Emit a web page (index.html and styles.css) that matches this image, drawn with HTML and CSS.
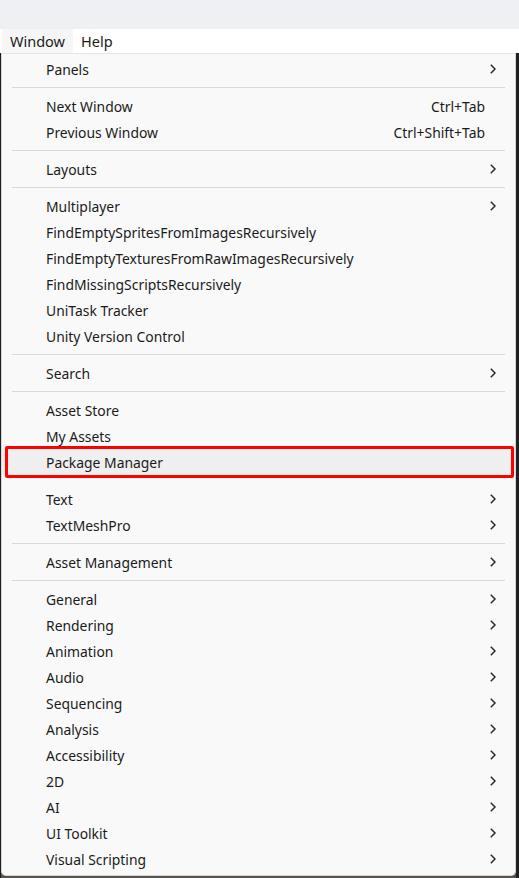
FILE: index.html
```html
<!DOCTYPE html>
<html>
<head>
<meta charset="utf-8">
<link rel="stylesheet" href="styles.css">
</head>
<body>
<div class="titlebar"></div>
<div class="menubar">
  <span class="mb-item active">Window</span>
  <span class="mb-item">Help</span>
</div>
<div class="backdrop">
  <div class="menu">
    <div class="item"><span class="label">Panels</span><svg class="chev" viewBox="0 0 6 10"><polyline points="0.8,0.8 5,5 0.8,9.2"/></svg></div>
    <div class="sep"></div>
    <div class="item"><span class="label">Next Window</span><span class="sc">Ctrl+Tab</span></div>
    <div class="item"><span class="label">Previous Window</span><span class="sc">Ctrl+Shift+Tab</span></div>
    <div class="sep"></div>
    <div class="item"><span class="label">Layouts</span><svg class="chev" viewBox="0 0 6 10"><polyline points="0.8,0.8 5,5 0.8,9.2"/></svg></div>
    <div class="sep"></div>
    <div class="item"><span class="label">Multiplayer</span><svg class="chev" viewBox="0 0 6 10"><polyline points="0.8,0.8 5,5 0.8,9.2"/></svg></div>
    <div class="item"><span class="label">FindEmptySpritesFromImagesRecursively</span></div>
    <div class="item"><span class="label">FindEmptyTexturesFromRawImagesRecursively</span></div>
    <div class="item"><span class="label">FindMissingScriptsRecursively</span></div>
    <div class="item"><span class="label">UniTask Tracker</span></div>
    <div class="item"><span class="label">Unity Version Control</span></div>
    <div class="sep"></div>
    <div class="item"><span class="label">Search</span><svg class="chev" viewBox="0 0 6 10"><polyline points="0.8,0.8 5,5 0.8,9.2"/></svg></div>
    <div class="sep"></div>
    <div class="item"><span class="label">Asset Store</span></div>
    <div class="item"><span class="label">My Assets</span></div>
    <div class="item hl"><span class="label">Package Manager</span><span class="mark"></span></div>
    <div class="sep after-hl"></div>
    <div class="item"><span class="label">Text</span><svg class="chev" viewBox="0 0 6 10"><polyline points="0.8,0.8 5,5 0.8,9.2"/></svg></div>
    <div class="item"><span class="label">TextMeshPro</span><svg class="chev" viewBox="0 0 6 10"><polyline points="0.8,0.8 5,5 0.8,9.2"/></svg></div>
    <div class="sep"></div>
    <div class="item"><span class="label">Asset Management</span><svg class="chev" viewBox="0 0 6 10"><polyline points="0.8,0.8 5,5 0.8,9.2"/></svg></div>
    <div class="sep"></div>
    <div class="item"><span class="label">General</span><svg class="chev" viewBox="0 0 6 10"><polyline points="0.8,0.8 5,5 0.8,9.2"/></svg></div>
    <div class="item"><span class="label">Rendering</span><svg class="chev" viewBox="0 0 6 10"><polyline points="0.8,0.8 5,5 0.8,9.2"/></svg></div>
    <div class="item"><span class="label">Animation</span><svg class="chev" viewBox="0 0 6 10"><polyline points="0.8,0.8 5,5 0.8,9.2"/></svg></div>
    <div class="item"><span class="label">Audio</span><svg class="chev" viewBox="0 0 6 10"><polyline points="0.8,0.8 5,5 0.8,9.2"/></svg></div>
    <div class="item"><span class="label">Sequencing</span><svg class="chev" viewBox="0 0 6 10"><polyline points="0.8,0.8 5,5 0.8,9.2"/></svg></div>
    <div class="item"><span class="label">Analysis</span><svg class="chev" viewBox="0 0 6 10"><polyline points="0.8,0.8 5,5 0.8,9.2"/></svg></div>
    <div class="item"><span class="label">Accessibility</span><svg class="chev" viewBox="0 0 6 10"><polyline points="0.8,0.8 5,5 0.8,9.2"/></svg></div>
    <div class="item"><span class="label">2D</span><svg class="chev" viewBox="0 0 6 10"><polyline points="0.8,0.8 5,5 0.8,9.2"/></svg></div>
    <div class="item"><span class="label">AI</span><svg class="chev" viewBox="0 0 6 10"><polyline points="0.8,0.8 5,5 0.8,9.2"/></svg></div>
    <div class="item"><span class="label">UI Toolkit</span><svg class="chev" viewBox="0 0 6 10"><polyline points="0.8,0.8 5,5 0.8,9.2"/></svg></div>
    <div class="item"><span class="label">Visual Scripting</span><svg class="chev" viewBox="0 0 6 10"><polyline points="0.8,0.8 5,5 0.8,9.2"/></svg></div>
  </div>
</div>
</body>
</html>
```
FILE: styles.css
```css
html, body {
  margin: 0;
  padding: 0;
}
body {
  width: 519px;
  height: 878px;
  overflow: hidden;
  background: #55514d;
  font-family: "Noto Sans", "Liberation Sans", sans-serif;
  font-size: 13.9px;
  color: #1b1b1b;
}
.titlebar {
  height: 29px;
  background: #eff0f3;
}
.menubar {
  height: 24px;
  background: #ffffff;
  display: flex;
  align-items: stretch;
  padding-left: 2px;
  font-size: 14.5px;
}
.mb-item {
  display: flex;
  align-items: center;
  padding: 0 8px;
  line-height: 1;
}
.mb-item.active {
  background: #f6f6f6;
  width: 55px;
}
.backdrop {
  height: 825px;
  background: linear-gradient(to right, #1e1e1e 0, #1e1e1e 1px, transparent 1px, transparent 516px, #202020 516px);
  display: flex;
  flex-direction: column;
}
.menu {
  margin-left: 1px;
  width: 513px;
  background: #f9f9f9;
  border: 1px solid #d6d6d6;
  border-top: 1px solid #e6e6e6;
  border-radius: 0 0 5px 5px;
  padding: 2px 0 3px;
}
.item {
  position: relative;
  height: 26px;
  display: flex;
  align-items: center;
  padding-left: 44px;
  padding-right: 19px;
}
.label {
  flex: 1;
  white-space: nowrap;
}
.sc {
  white-space: nowrap;
  margin-right: 11px;
}
.chev {
  width: 6px;
  height: 10px;
  fill: none;
  stroke: #2a2a2a;
  stroke-width: 1.5;
}
.sep {
  height: 1px;
  margin: 5px 10px 5px 10px;
  background: #d9d9d9;
}
.sep.after-hl {
  margin-top: 2px;
  margin-bottom: 8px;
}
.item.hl {
  background: #efefef;
  z-index: 1;
}
.mark {
  position: absolute;
  left: 3px;
  right: 1px;
  top: -3px;
  bottom: -3px;
  border: 3px solid #ff0000;
  border-radius: 2px;
}
```
